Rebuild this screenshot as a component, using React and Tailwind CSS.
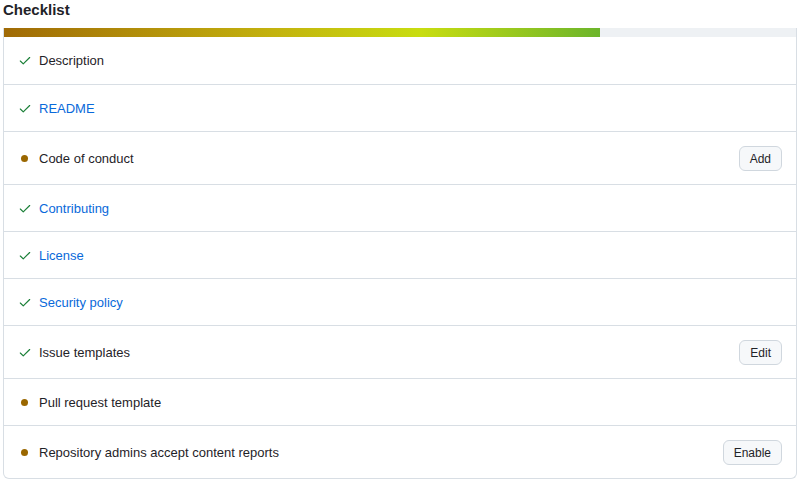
import { Check } from "lucide-react";

const items = [
  { label: "Description", done: true },
  { label: "README", done: true, link: true },
  { label: "Code of conduct", done: false, action: "Add" },
  { label: "Contributing", done: true, link: true },
  { label: "License", done: true, link: true },
  { label: "Security policy", done: true, link: true },
  { label: "Issue templates", done: true, action: "Edit" },
  { label: "Pull request template", done: false },
  { label: "Repository admins accept content reports", done: false, action: "Enable" },
];

export default function App() {
  return (
    <div className="min-h-screen bg-white px-[3px] text-[#1f2328]" style={{ fontFamily: "'Liberation Sans', Arial, sans-serif" }}>
      <h2 className="flex h-[28px] items-center pb-[7px] text-[15px] font-bold">Checklist</h2>
      <div className="overflow-hidden rounded-b-md border border-t-0 border-[#d8dee4]">
        <div className="h-[9px] bg-[#eef1f4]">
          <div className="h-full w-[75.3%] bg-[linear-gradient(90deg,#a06a05_0%,#c3b20e_45%,#c8dd10_70%,#6cb52b_100%)]" />
        </div>
        {items.map((item, i) => (
          <div
            key={item.label}
            className={`flex items-center border-[#d8dee4] pl-[14px] pr-[14px] pt-[1px] text-[13px] ${i > 0 ? "border-t" : ""} ${item.action ? "h-[53px]" : "h-[47px]"}`}
          >
            <span className="flex w-[21px] items-center">
              {item.done ? (
                <Check size={14} strokeWidth={2} className="text-[#1a7f37]" />
              ) : (
                <span className="ml-[3px] h-[7px] w-[7px] rounded-full bg-[#9a6700]" />
              )}
            </span>
            <span className={item.link ? "text-[#0969da]" : ""}>{item.label}</span>
            {item.action && (
              <button
                type="button"
                className="ml-auto h-[25px] rounded-md border border-[#d0d7de] bg-[#f6f8fa] px-[10px] text-[12px] font-medium text-[#1f2328]"
              >
                {item.action}
              </button>
            )}
          </div>
        ))}
      </div>
    </div>
  );
}
